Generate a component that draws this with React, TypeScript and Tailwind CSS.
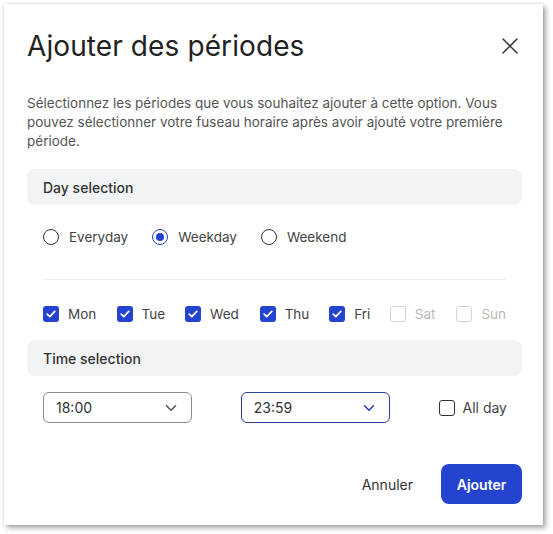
import { useState } from 'react';

const days = [
  { key: 'mon', label: 'Mon', checked: true, disabled: false, width: 'w-[74px]' },
  { key: 'tue', label: 'Tue', checked: true, disabled: false, width: 'w-[69px]' },
  { key: 'wed', label: 'Wed', checked: true, disabled: false, width: 'w-[75px]' },
  { key: 'thu', label: 'Thu', checked: true, disabled: false, width: 'w-[70px]' },
  { key: 'fri', label: 'Fri', checked: true, disabled: false, width: 'w-[61px]' },
  { key: 'sat', label: 'Sat', checked: false, disabled: true, width: 'w-[67px]' },
  { key: 'sun', label: 'Sun', checked: false, disabled: true, width: 'w-auto' },
];

function Checkbox({ checked, disabled }: { checked: boolean; disabled?: boolean }) {
  if (checked) {
    return (
      <span className="flex h-4 w-4 shrink-0 items-center justify-center rounded-[3px] bg-[#2443cf]">
        <svg width="10" height="8" viewBox="0 0 10 8" fill="none">
          <path d="M1.2 4.2L3.8 6.6L8.8 1.4" stroke="white" strokeWidth="1.7" strokeLinecap="round" strokeLinejoin="round" />
        </svg>
      </span>
    );
  }
  return (
    <span
      className={
        disabled
          ? 'h-4 w-4 shrink-0 rounded-[3px] border border-[#d4d4d4] bg-white'
          : 'h-4 w-4 shrink-0 rounded-[3px] border-[1.5px] border-[#333] bg-white'
      }
    />
  );
}

function Radio({ selected }: { selected: boolean }) {
  return selected ? (
    <span className="flex h-4 w-4 items-center justify-center rounded-full border-[1.5px] border-[#2443cf]">
      <span className="h-2 w-2 rounded-full bg-[#2443cf]" />
    </span>
  ) : (
    <span className="h-4 w-4 rounded-full border-[1.5px] border-[#333]" />
  );
}

function Chevron({ color }: { color: string }) {
  return (
    <svg width="12" height="8" viewBox="0 0 12 8" fill="none">
      <path d="M1.5 1.8L6 6.2L10.5 1.8" stroke={color} strokeWidth="1.6" strokeLinecap="round" strokeLinejoin="round" />
    </svg>
  );
}

export default function App() {
  const [mode, setMode] = useState('weekday');

  return (
    <div className="min-h-screen bg-white p-1 font-['Inter','Liberation_Sans',sans-serif]">
      <div className="w-[539px] bg-white pl-[23px] pr-[21px] pt-[26px] pb-[21px] shadow-[0_0_3px_rgba(0,0,0,0.18),3px_3px_5px_rgba(0,0,0,0.32)]">
        <div className="flex items-center justify-between">
          <h2 className="text-[28px] leading-[32px] text-[#222] tracking-[0.1px]">Ajouter des périodes</h2>
          <svg width="16" height="16" viewBox="0 0 16 16" fill="none" className="mr-[4px]">
            <path d="M1 1L15 15M15 1L1 15" stroke="#333" strokeWidth="1.5" strokeLinecap="round" />
          </svg>
        </div>

        <p className="mt-[32px] text-[13.5px] leading-[19px] text-[#555]">
          Sélectionnez les périodes que vous souhaitez ajouter à cette option. Vous pouvez sélectionner votre fuseau
          horaire après avoir ajouté votre première période.
        </p>

        <div className="mt-[18px] flex h-9 items-center rounded-lg bg-[#f2f3f5] px-4 text-[14px] font-medium text-[#333]">
          Day selection
        </div>

        <div className="mt-5 flex h-6 items-center gap-6 px-4 text-[13.5px] text-[#444]">
          {[
            { key: 'everyday', label: 'Everyday' },
            { key: 'weekday', label: 'Weekday' },
            { key: 'weekend', label: 'Weekend' },
          ].map((r) => (
            <button key={r.key} className="flex items-center gap-[10px]" onClick={() => setMode(r.key)}>
              <Radio selected={mode === r.key} />
              <span>{r.label}</span>
            </button>
          ))}
        </div>

        <div className="mx-4 mt-[30px] h-px bg-[#ececec]" />

        <div className="mt-[22px] flex h-6 items-center px-4 text-[13.5px]">
          {days.map((d) => (
            <div key={d.key} className={`${d.width} flex items-center gap-[9px]`}>
              <Checkbox checked={d.checked} disabled={d.disabled} />
              <span className={d.disabled ? 'text-[#b8b8b8]' : 'text-[#444]'}>{d.label}</span>
            </div>
          ))}
        </div>

        <div className="mt-[14px] flex h-9 items-center rounded-lg bg-[#f2f3f5] px-4 text-[14px] font-medium text-[#333]">
          Time selection
        </div>

        <div className="mt-4 flex items-center justify-between pl-4 pr-[15px] text-[14px] text-[#333]">
          <div className="flex h-[31px] w-[149px] items-center justify-between rounded-md border border-[#8a8a8a] pl-3 pr-[14px]">
            <span>18:00</span>
            <Chevron color="#555" />
          </div>
          <div className="flex h-[31px] w-[149px] items-center justify-between rounded-md border border-[#2a3f9e] pl-3 pr-[14px]">
            <span>23:59</span>
            <Chevron color="#2443cf" />
          </div>
          <div className="flex items-center gap-[8px] text-[#444]">
            <Checkbox checked={false} />
            <span>All day</span>
          </div>
        </div>

        <div className="mt-[41px] flex items-center justify-end gap-3">
          <button className="h-10 px-4 text-[14px] text-[#333]">Annuler</button>
          <button className="h-10 w-[81px] rounded-lg bg-[#2443cf] text-[14px] font-semibold text-white">Ajouter</button>
        </div>
      </div>
    </div>
  );
}
